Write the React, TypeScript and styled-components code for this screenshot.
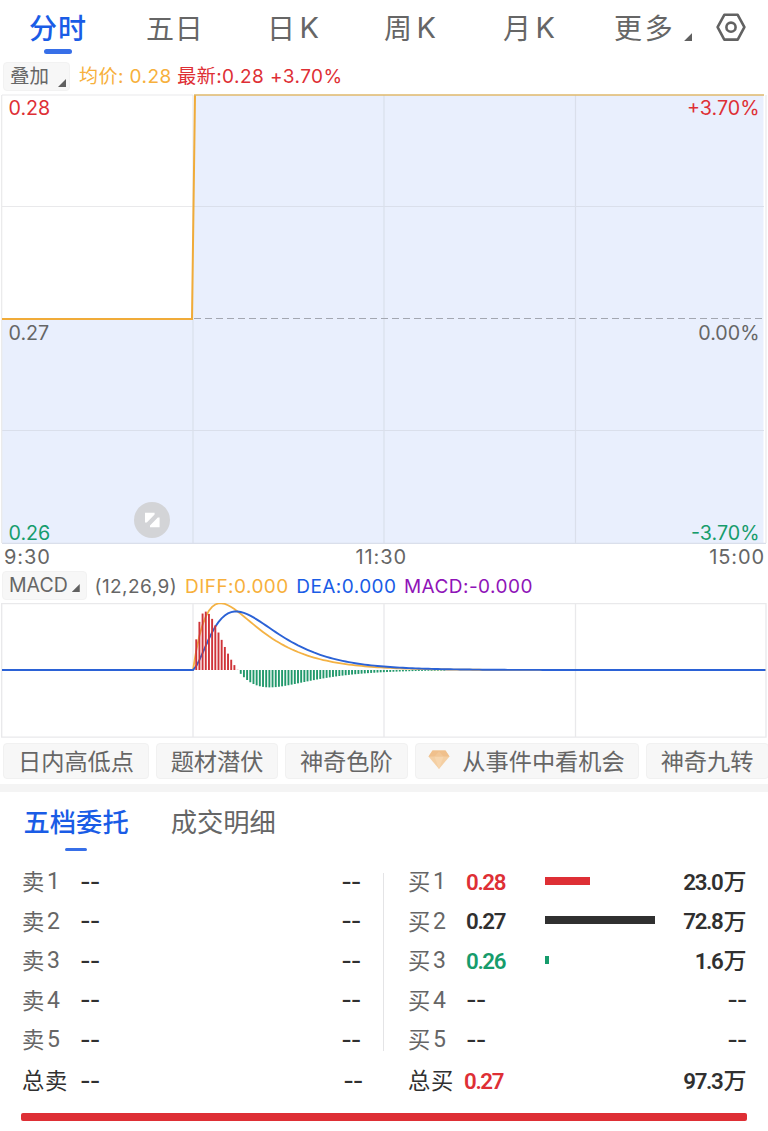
import React from "react";
import styled, { createGlobalStyle } from "styled-components";

const color = {
  blue: "#1a5ce6",
  gray: "#666666",
  dark: "#303030",
  red: "#de2f35",
  green: "#169c6c",
  amber: "#f7b03c",
  purple: "#8f14b8",
  chip: "#f7f7f7",
  grid: "#e9e9eb",
};

const latin = `Inter, "Noto Sans CJK SC", sans-serif`;
const cjk = `"Noto Sans CJK SC", sans-serif`;

const GlobalStyle = createGlobalStyle`
  * { box-sizing: border-box; }
  body { margin: 0; background: #fff; }
`;

const Page = styled.main`
  width: 768px;
  height: 1131px;
  overflow: hidden;
  display: flex;
  flex-direction: column;
  background: #fff;
  color: ${color.gray};
  font-family: ${latin};
  font-size: 20px;
`;

/* ---------- period tabs ---------- */

const PeriodBar = styled.nav`
  height: 62px;
  flex: none;
  display: grid;
  grid-template-columns: 117px 121px 117px 119px 111px 102px auto;
  padding-left: 29px;
`;

const Period = styled.div<{ $active?: boolean }>`
  display: flex;
  flex-direction: column;
  align-items: flex-start;
  font: ${(p) => (p.$active ? 500 : 400)} 28px/54px ${cjk};
  letter-spacing: ${(p) => (p.$active ? 1 : 1.5)}px;
  color: ${(p) => (p.$active ? color.blue : color.gray)};
  white-space: nowrap;
`;

const PeriodLabel = styled.div<{ $track?: number }>`
  height: 49px;
  display: flex;
  ${(p) => p.$track !== undefined && `letter-spacing: ${p.$track}px;`}
`;

const Letter = styled.span`
  font-family: Inter, sans-serif;
  font-size: 29px;
  font-weight: 400;
  line-height: 55px;
  margin-left: 3px;
`;

const PeriodMark = styled.i`
  width: 28px;
  height: 5px;
  margin-left: 15px;
  border-radius: 3px;
  background: #376fe8;
`;

const Corner = styled.i<{ $size: number; $left: number; $top: number }>`
  width: ${(p) => p.$size}px;
  height: ${(p) => p.$size}px;
  margin-left: ${(p) => p.$left}px;
  margin-top: ${(p) => p.$top}px;
  background: #606060;
  clip-path: polygon(100% 0, 100% 100%, 0 100%);
`;

const SettingsIcon = styled.svg`
  margin-top: 12px;
`;

/* ---------- indicator rows ---------- */

const InfoRow = styled.div<{ $height: number; $left: number }>`
  height: ${(p) => p.$height}px;
  flex: none;
  display: flex;
  align-items: flex-start;
  padding-left: ${(p) => p.$left}px;
`;

const Picker = styled.div<{ $width: number; $pad: number }>`
  width: ${(p) => p.$width}px;
  height: 29px;
  padding-left: ${(p) => p.$pad}px;
  display: flex;
  border: 1px solid #f2f2f2;
  border-radius: 4px;
  background: ${color.chip};
  line-height: 27px;
  font-size: 19.5px;
`;

const Reading = styled.span<{ $color: string; $left: number; $line?: number }>`
  margin-left: ${(p) => p.$left}px;
  color: ${(p) => p.$color};
  letter-spacing: 0.45px;
  line-height: ${(p) => p.$line ?? 29}px;
  font-size: 19px;
  white-space: nowrap;
`;

/* ---------- charts ---------- */

const ChartArea = styled.section<{ $height: number }>`
  position: relative;
  height: ${(p) => p.$height}px;
  flex: none;
  svg { display: block; }
`;

const ChartLabel = styled.span<{ $color: string; $top: number; $right?: boolean }>`
  position: absolute;
  top: ${(p) => p.$top}px;
  ${(p) => (p.$right ? "right: 8.5px;" : "left: 8.5px;")}
  color: ${(p) => p.$color};
  font-size: 19.7px;
  line-height: 24px;
`;

const TimeAxis = styled.div`
  height: 27px;
  flex: none;
  display: grid;
  grid-template-columns: 351.5px 1fr auto;
  padding: 0 3px 0 4px;
  line-height: 27px;
  font-size: 20px;
  letter-spacing: 0.9px;
`;

/* ---------- strategy chips ---------- */

const ChipRow = styled.div`
  height: 46px;
  flex: none;
  display: flex;
  gap: 7px;
  padding: 5px 0 0 3px;
`;

const Chip = styled.div<{ $width: number }>`
  width: ${(p) => p.$width}px;
  height: 36px;
  flex: none;
  display: flex;
  align-items: center;
  justify-content: center;
  gap: 12px;
  padding: 0 0 2px;
  border: 1px solid #f1f1f1;
  border-radius: 4px;
  background: ${color.chip};
  font: 400 23.2px/32px ${cjk};
  white-space: nowrap;
`;

const Divider = styled.div`
  height: 8px;
  flex: none;
  background: #f4f4f4;
`;

/* ---------- order book ---------- */

const BookTabs = styled.nav`
  height: 70px;
  flex: none;
  display: flex;
  gap: 42px;
  padding-left: 23.5px;
`;

const BookTab = styled.div<{ $active?: boolean }>`
  display: flex;
  flex-direction: column;
  align-items: center;
  font: ${(p) => (p.$active ? 500 : 400)} 26.3px/58px ${cjk};
  color: ${(p) => (p.$active ? color.blue : color.gray)};
`;

const BookMark = styled.i`
  width: 22px;
  height: 3px;
  margin-top: -2px;
  border-radius: 2px;
  background: #376fe8;
`;

const Book = styled.section`
  display: flex;
  flex: none;
`;

const BookSide = styled.div<{ $buy?: boolean }>`
  width: ${(p) => (p.$buy ? 384 : 383)}px;
  padding: 0 ${(p) => (p.$buy ? 21.5 : 22.5)}px 0 ${(p) => (p.$buy ? 24 : 22)}px;
`;

const BookDivider = styled.i`
  width: 1px;
  height: 178px;
  margin-top: 11px;
  background: #e4e4e6;
`;

const Level = styled.div<{ $total?: boolean; $buy?: boolean }>`
  display: grid;
  grid-template-columns: ${(p) => (p.$buy ? (p.$total ? "56px 82px" : "58px 79px") : "58px 80px")} 1fr auto;
  align-items: center;
  height: ${(p) => (p.$total ? 42 : 39.5)}px;
  color: ${(p) => (p.$total ? color.dark : color.gray)};
`;

const LevelName = styled.span`
  display: flex;
  gap: 2px;
  font: 400 22.3px/34px ${cjk};
  letter-spacing: 0.6px;
  padding-bottom: 3px;
  b {
    font: 400 23px/38px Roboto, sans-serif;
    height: 34px;
  }
`;

const Amount = styled.span<{ $color?: string; $nudge?: number }>`
  display: flex;
  align-items: center;
  margin-right: ${(p) => p.$nudge ?? 0}px;
  color: ${(p) => p.$color ?? color.dark};
  font: 600 22.3px/38px Roboto, sans-serif;
  letter-spacing: -1.35px;
  white-space: nowrap;
`;

const Unit = styled.span`
  font: 500 23px/34px ${cjk};
  letter-spacing: 0;
  margin-left: 1px;
  padding-bottom: 3px;
`;

const Dash = styled.span`
  font: 500 23px/38px Inter, sans-serif;
  letter-spacing: -1px;
`;

const VolumeBar = styled.i<{ $color: string }>`
  height: 8px;
  margin-top: -2px;
  background: ${(p) => p.$color};
`;

const RatioBar = styled.div`
  height: 8px;
  flex: none;
  margin: 11px 21px 0;
  border-radius: 2px;
  background: ${color.red};
`;

/* ---------- MACD series: response to one price step ---------- */

const STEP = 3.18;
const ORIGIN = 193;
const BASE = 67;
const SCALE = 66.5 / 0.277;

const series = (() => {
  const out: { x: number; diff: number; dea: number }[] = [];
  let dea = 0;
  for (let n = 0; n <= 180; n++) {
    const diff = Math.pow(25 / 27, n) - Math.pow(11 / 13, n);
    dea = dea * 0.8 + diff * 0.2;
    out.push({ x: ORIGIN + n * STEP, diff: diff * SCALE, dea: dea * SCALE });
  }
  return out;
})();

const trace = (key: "diff" | "dea") =>
  `M2 ${BASE} L` + series.map((p) => `${p.x.toFixed(2)} ${(BASE - p[key]).toFixed(2)}`).join(" L");

function PriceChart() {
  return (
    <ChartArea $height={450}>
      <svg width="768" height="450" viewBox="0 0 768 450">
        <path d="M2 224.5H192L195 1H763.5V449H2Z" fill="#e9effd" />
        <g stroke="#dadfeb" strokeWidth="1.2" fill="none">
          <path d="M193 225V449M384 1V449M575.5 1V449M193 112.5H764M2 336.5H764M2 449.3H766" />
        </g>
        <path d="M2 112.5H193M193 1V224M2 1H193M1.7 1V449M766 1V449" stroke={color.grid} strokeWidth="1.2" />
        <path d="M194 224.5H764" stroke="#a3a7b1" strokeWidth="1.2" strokeDasharray="7 4" />
        <path d="M2 225H192L195 1" fill="none" stroke="#f0ab39" strokeWidth="2" />
        <path d="M194 1H764" stroke="#dfb86b" strokeWidth="1.5" />
        <circle cx="152" cy="426" r="18" fill="#d3d4d7" />
        <path d="M145 418.8H154.6V420.6L146.8 428.6H145ZM159.6 423.4V433.2H150V431.4L157.8 423.4Z" fill="#fff" />
      </svg>
      <ChartLabel $color={color.red} $top={2}>0.28</ChartLabel>
      <ChartLabel $color={color.red} $top={2} $right>+3.70%</ChartLabel>
      <ChartLabel $color={color.gray} $top={227}>0.27</ChartLabel>
      <ChartLabel $color={color.gray} $top={227} $right>0.00%</ChartLabel>
      <ChartLabel $color={color.green} $top={427}>0.26</ChartLabel>
      <ChartLabel $color={color.green} $top={427} $right>-3.70%</ChartLabel>
    </ChartArea>
  );
}

function MacdChart() {
  return (
    <ChartArea $height={135}>
      <svg width="768" height="135" viewBox="0 0 768 135">
        <path
          d="M1.7 .7H766V134.2H1.7ZM193 1V134M384 1V134M575.5 1V134"
          fill="none"
          stroke={color.grid}
          strokeWidth="1.3"
        />
        <path d={trace("diff")} fill="none" stroke="#f4b244" strokeWidth="1.8" />
        <path d={trace("dea")} fill="none" stroke="#2b62d6" strokeWidth="1.9" />
        {series.slice(1, 80).map((p) => {
          const h = 2 * (p.diff - p.dea);
          return (
            <rect
              key={p.x}
              x={p.x - 0.9}
              y={h > 0 ? BASE - h : BASE}
              width="1.9"
              height={Math.abs(h)}
              fill={h > 0 ? "#cf3439" : "#22996c"}
            />
          );
        })}
        <path d={`M2 ${BASE}H193`} stroke="#2b62d6" strokeWidth="2" />
      </svg>
    </ChartArea>
  );
}

function Gem() {
  return (
    <svg width="22" height="20" viewBox="0 0 22 20">
      <path d="M4.5 .5H17.5L21.5 6.5L11 19L.5 6.5Z" fill="#f4cfa3" />
      <path d="M4.5 .5H17.5L21.5 6.5H.5Z" fill="#f0c08c" />
      <path d="M6.5 6.5H15.5L11 19Z" fill="#f7d6ae" />
      <path d="M6.5 6.5L11 1.5L15.5 6.5Z" fill="#f2c797" />
    </svg>
  );
}

const bids = [
  { price: "0.28", tone: color.red, bar: 44.5, size: "23.0" },
  { price: "0.27", tone: color.dark, bar: 110, size: "72.8" },
  { price: "0.26", tone: color.green, bar: 3.5, size: "1.6" },
  null,
  null,
];

export default function App() {
  return (
    <Page>
      <GlobalStyle />
      <PeriodBar>
        <Period $active>
          <PeriodLabel>分时</PeriodLabel>
          <PeriodMark />
        </Period>
        <Period><PeriodLabel $track={0.8}>五日</PeriodLabel></Period>
        {["日", "周", "月"].map((unit) => (
          <Period key={unit}>
            <PeriodLabel>{unit}<Letter>K</Letter></PeriodLabel>
          </Period>
        ))}
        <Period>
          <PeriodLabel $track={2.8}>更多<Corner $size={8} $left={8.5} $top={33} /></PeriodLabel>
        </Period>
        <SettingsIcon width="30" height="30" viewBox="0 0 30 30" fill="none" stroke="#626262" strokeWidth="2.6">
          <path d="M8.3 2.8H21.7L28.4 15.2L21.7 27.6H8.3L1.6 15.2Z" strokeLinejoin="round" />
          <circle cx="15" cy="15.2" r="4.6" />
        </SettingsIcon>
      </PeriodBar>

      <InfoRow $height={32} $left={3}>
        <Picker $width={67} $pad={6}>叠加<Corner $size={8} $left={9} $top={16} /></Picker>
        <Reading $color={color.amber} $left={9}>均价: 0.28</Reading>
        <Reading $color={color.red} $left={5.5}>最新:0.28 +3.70%</Reading>
      </InfoRow>

      <PriceChart />
      <TimeAxis><span>9:30</span><span>11:30</span><span>15:00</span></TimeAxis>

      <InfoRow $height={32} $left={2}>
        <Picker $width={85} $pad={6}>MACD<Corner $size={8} $left={4} $top={12} /></Picker>
        <Reading $color={color.gray} $left={7.5} $line={31}>(12,26,9)</Reading>
        <Reading $color={color.amber} $left={8} $line={31}>DIFF:0.000</Reading>
        <Reading $color={color.blue} $left={7.5} $line={31}>DEA:0.000</Reading>
        <Reading $color={color.purple} $left={7.5} $line={31}>MACD:-0.000</Reading>
      </InfoRow>

      <MacdChart />

      <ChipRow>
        <Chip $width={146}>日内高低点</Chip>
        <Chip $width={122}>题材潜伏</Chip>
        <Chip $width={122.5}>神奇色阶</Chip>
        <Chip $width={224}><Gem />从事件中看机会</Chip>
        <Chip $width={123}>神奇九转</Chip>
      </ChipRow>
      <Divider />

      <BookTabs>
        <BookTab $active>五档委托<BookMark /></BookTab>
        <BookTab>成交明细</BookTab>
      </BookTabs>

      <Book>
        <BookSide>
          {[1, 2, 3, 4, 5].map((n) => (
            <Level key={n}>
              <LevelName>卖<b>{n}</b></LevelName>
              <Amount><Dash>--</Dash></Amount>
              <span />
              <Amount><Dash>--</Dash></Amount>
            </Level>
          ))}
          <Level $total>
            <LevelName>总卖</LevelName>
            <Amount><Dash>--</Dash></Amount>
            <span />
            <Amount $nudge={-2}><Dash>--</Dash></Amount>
          </Level>
        </BookSide>
        <BookDivider />
        <BookSide $buy>
          {bids.map((bid, i) => (
            <Level key={i} $buy>
              <LevelName>买<b>{i + 1}</b></LevelName>
              <Amount $color={bid?.tone}>{bid ? bid.price : <Dash>--</Dash>}</Amount>
              {bid ? <VolumeBar $color={bid.tone} style={{ width: bid.bar }} /> : <span />}
              <Amount>{bid ? <>{bid.size}<Unit>万</Unit></> : <Dash>--</Dash>}</Amount>
            </Level>
          ))}
          <Level $buy $total>
            <LevelName>总买</LevelName>
            <Amount $color={color.red}>0.27</Amount>
            <span />
            <Amount>97.3<Unit>万</Unit></Amount>
          </Level>
        </BookSide>
      </Book>
      <RatioBar />
    </Page>
  );
}
